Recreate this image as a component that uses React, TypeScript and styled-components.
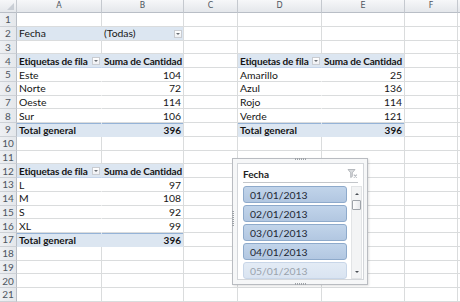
import React from "react";
import styled, { createGlobalStyle } from "styled-components";

const Global = createGlobalStyle`
  html, body { margin: 0; padding: 0; background: #fff; }
  body { font-family: Lato, "Open Sans", sans-serif; overflow: hidden; }
`;

const COLS = ["A", "B", "C", "D", "E", "F", "G"];
const ROW_H = 13.75;

const Sheet = styled.div`
  position: relative;
  width: 460px;
  height: 302px;
  overflow: hidden;
`;

const Grid = styled.div`
  display: grid;
  grid-template-columns: 17px 85px 82px 54px 84px 83px 53px 40px;
  grid-template-rows: 13px;
  grid-auto-rows: ${ROW_H}px;
  font-size: 10.4px;
  color: #151515;
`;

const Corner = styled.div`
  background: linear-gradient(#f6f7f9, #e4e7eb);
  border-right: 1px solid #c5c9cf;
  border-bottom: 1px solid #b9bec6;
  box-sizing: border-box;
  position: relative;
  &::after {
    content: "";
    position: absolute;
    right: 2px;
    bottom: 2px;
    border-left: 7px solid transparent;
    border-bottom: 7px solid #c9ced5;
  }
`;

const ColHead = styled.div`
  background: linear-gradient(#f6f7f9, #e4e7eb);
  border-right: 1px solid #c5c9cf;
  border-bottom: 1px solid #b9bec6;
  box-sizing: border-box;
  display: flex;
  align-items: center;
  justify-content: center;
  font-family: "DejaVu Sans", sans-serif;
  font-size: 8px;
  color: #4d5560;
  line-height: 1;
`;

const RowHead = styled.div`
  background: linear-gradient(90deg, #eef0f3, #e4e7eb);
  border-right: 1px solid #b9bec6;
  border-bottom: 1px solid #cdd1d6;
  box-sizing: border-box;
  display: flex;
  align-items: center;
  justify-content: center;
  font-size: 10px;
  color: #4d5560;
  line-height: 1;
`;

type Variant = "plain" | "filter" | "head" | "data" | "total";

const Cell = styled.div<{ $v: Variant; $right?: boolean; $inner?: boolean }>`
  box-sizing: border-box;
  border-bottom: 1px solid
    ${(p) => (p.$v === "head" ? "#c5d5ea" : p.$v === "total" ? "#dce6f1" : "#dadcdd")};
  border-right: 1px solid
    ${(p) =>
      p.$inner
        ? p.$v === "data"
          ? "#fff"
          : "#dce6f1"
        : "#dadcdd"};
  background: ${(p) =>
    p.$v === "filter" || p.$v === "head" || p.$v === "total" ? "#dce6f1" : "#fff"};
  box-shadow: ${(p) => (p.$v === "total" ? "inset 0 1px 0 #95b3d7" : "none")};
  font-weight: ${(p) => (p.$v === "head" || p.$v === "total" ? 700 : 400)};
  font-size: ${(p) => (p.$v === "head" || p.$v === "total" ? "10px" : "10.4px")};
  letter-spacing: ${(p) => (p.$v === "head" ? "-0.15px" : "0")};
  display: flex;
  align-items: center;
  justify-content: ${(p) => (p.$right ? "flex-end" : "space-between")};
  padding: 1px 2px 0 2px;
  white-space: nowrap;
  overflow: visible;
  line-height: 1;
`;

const DropBtn = styled.span`
  width: 8px;
  height: 8px;
  box-sizing: border-box;
  border: 1px solid #c9ccd1;
  background: linear-gradient(#ffffff, #eef0f3);
  display: flex;
  align-items: center;
  justify-content: center;
  flex: none;
  margin-right: -1px;
  &::after {
    content: "";
    border-left: 2px solid transparent;
    border-right: 2px solid transparent;
    border-top: 2px solid #6b6f75;
  }
`;

/* ---------- Slicer ---------- */

const SlicerFrame = styled.div`
  position: absolute;
  left: 232px;
  top: 158px;
  width: 136px;
  height: 127px;
  box-sizing: border-box;
  border: 1px solid #b9bcc1;
  background: rgba(246, 247, 248, 0.95);
  box-shadow: 1px 1px 2px rgba(0, 0, 0, 0.12);
  padding: 4px 3px 4px 4px;
  display: flex;
`;

const Handle = styled.div<{ $side: "top" | "bottom" | "left" }>`
  position: absolute;
  ${(p) =>
    p.$side === "left"
      ? `left: -1px; top: 52px; width: 2px; height: 16px;
         background: repeating-linear-gradient(#9fa3a8 0 1px, transparent 1px 2px);`
      : `${p.$side}: -1px; left: 62px; width: 12px; height: 2px;
         background: repeating-linear-gradient(90deg, #9fa3a8 0 1px, transparent 1px 2px);`}
`;

const Panel = styled.div`
  flex: 1;
  background: #fff;
  border: 1px solid #d3d6da;
  display: flex;
  flex-direction: column;
  padding: 0 1px 0 5px;
  overflow: hidden;
`;

const SlicerHead = styled.div`
  height: 17px;
  margin-right: 4px;
  display: flex;
  align-items: center;
  justify-content: space-between;
  border-bottom: 1px solid #c3c6ca;
  font-weight: 700;
  font-size: 10px;
  color: #222;
  padding-top: 1px;
`;

const SlicerBody = styled.div`
  display: flex;
  gap: 4px;
  padding-top: 3px;
  flex: 1;
  overflow: hidden;
`;

const ItemList = styled.div`
  flex: 1;
  display: flex;
  flex-direction: column;
  gap: 2px;
`;

const Item = styled.div<{ $faded?: boolean }>`
  height: 17px;
  flex: none;
  box-sizing: border-box;
  border: 1px solid ${(p) => (p.$faded ? "#c8d6e8" : "#8eaacb")};
  border-radius: 3px;
  background: ${(p) =>
    p.$faded
      ? "linear-gradient(#e3ebf5, #d9e4f1)"
      : "linear-gradient(#c1d4ea, #b2c7e1)"};
  color: ${(p) => (p.$faded ? "#9aa3ad" : "#1d2733")};
  font-size: 10.4px;
  display: flex;
  align-items: center;
  padding-left: 6px;
  padding-top: 1px;
`;

const ScrollBar = styled.div`
  width: 11px;
  flex: none;
  display: flex;
  flex-direction: column;
  align-items: stretch;
  background: #f3f4f5;
  border: 1px solid #e2e4e6;
  box-sizing: border-box;
`;

const ScrollArrow = styled.div<{ $down?: boolean }>`
  height: 13px;
  display: flex;
  align-items: center;
  justify-content: center;
  &::after {
    content: "";
    border-left: 2px solid transparent;
    border-right: 2px solid transparent;
    ${(p) => (p.$down ? "border-top" : "border-bottom")}: 2px solid #4a4f55;
  }
`;

const Thumb = styled.div`
  height: 8px;
  border: 1px solid #9ea3a9;
  border-radius: 1px;
  background: linear-gradient(90deg, #fdfdfd, #e6e8eb);
`;

const Track = styled.div`
  flex: 1;
`;

const ClearIcon = () => (
  <svg width="11" height="11" viewBox="0 0 11 11">
    <path d="M1 1.5h7l-2.7 3.3v3.7l-1.6 1v-4.7z" fill="#d9dbde" stroke="#a8acb1" strokeWidth="0.8" />
    <path d="M6.8 6.6l3 3M9.8 6.6l-3 3" stroke="#b3b7bc" strokeWidth="1.1" />
  </svg>
);

/* ---------- data ---------- */

type C = { t: string; v: Variant; right?: boolean; drop?: boolean; inner?: boolean };
const cells: Record<number, Record<string, C>> = {
  2: {
    A: { t: "Fecha", v: "filter", inner: true },
    B: { t: "(Todas)", v: "filter", drop: true },
  },
  4: {
    A: { t: "Etiquetas de fila", v: "head", drop: true, inner: true },
    B: { t: "Suma de Cantidad", v: "head" },
    D: { t: "Etiquetas de fila", v: "head", drop: true, inner: true },
    E: { t: "Suma de Cantidad", v: "head" },
  },
  12: {
    A: { t: "Etiquetas de fila", v: "head", drop: true, inner: true },
    B: { t: "Suma de Cantidad", v: "head" },
  },
};

const addPivot = (start: number, colL: string, colR: string, rows: [string, string][]) => {
  rows.forEach(([l, n], i) => {
    const r = start + i;
    cells[r] = cells[r] || {};
    const last = i === rows.length - 1;
    cells[r][colL] = { t: l, v: last ? "total" : "data", inner: true };
    cells[r][colR] = { t: n, v: last ? "total" : "data", right: true };
  });
};

addPivot(5, "A", "B", [["Este", "104"], ["Norte", "72"], ["Oeste", "114"], ["Sur", "106"], ["Total general", "396"]]);
addPivot(5, "D", "E", [["Amarillo", "25"], ["Azul", "136"], ["Rojo", "114"], ["Verde", "121"], ["Total general", "396"]]);
addPivot(13, "A", "B", [["L", "97"], ["M", "108"], ["S", "92"], ["XL", "99"], ["Total general", "396"]]);

const ROWS = Array.from({ length: 21 }, (_, i) => i + 1);
const dates = ["01/01/2013", "02/01/2013", "03/01/2013", "04/01/2013", "05/01/2013"];

export default function App() {
  return (
    <Sheet>
      <Global />
      <Grid>
        <Corner />
        {COLS.map((c) => (
          <ColHead key={c}>{c === "G" ? "" : c}</ColHead>
        ))}
        {ROWS.map((r) => (
          <React.Fragment key={r}>
            <RowHead>{r}</RowHead>
            {COLS.map((c) => {
              const d = cells[r]?.[c];
              if (!d) return <Cell key={c} $v="plain" />;
              return (
                <Cell key={c} $v={d.v} $right={d.right} $inner={d.inner}>
                  <span>{d.t}</span>
                  {d.drop && <DropBtn />}
                </Cell>
              );
            })}
          </React.Fragment>
        ))}
      </Grid>

      <SlicerFrame>
        <Handle $side="top" />
        <Handle $side="left" />
        <Handle $side="bottom" />
        <Panel>
          <SlicerHead>
            <span>Fecha</span>
            <ClearIcon />
          </SlicerHead>
          <SlicerBody>
            <ItemList>
              {dates.map((d, i) => (
                <Item key={d} $faded={i === 4}>
                  {d}
                </Item>
              ))}
            </ItemList>
            <ScrollBar>
              <ScrollArrow />
              <Thumb />
              <Track />
              <ScrollArrow $down />
            </ScrollBar>
          </SlicerBody>
        </Panel>
      </SlicerFrame>
    </Sheet>
  );
}
